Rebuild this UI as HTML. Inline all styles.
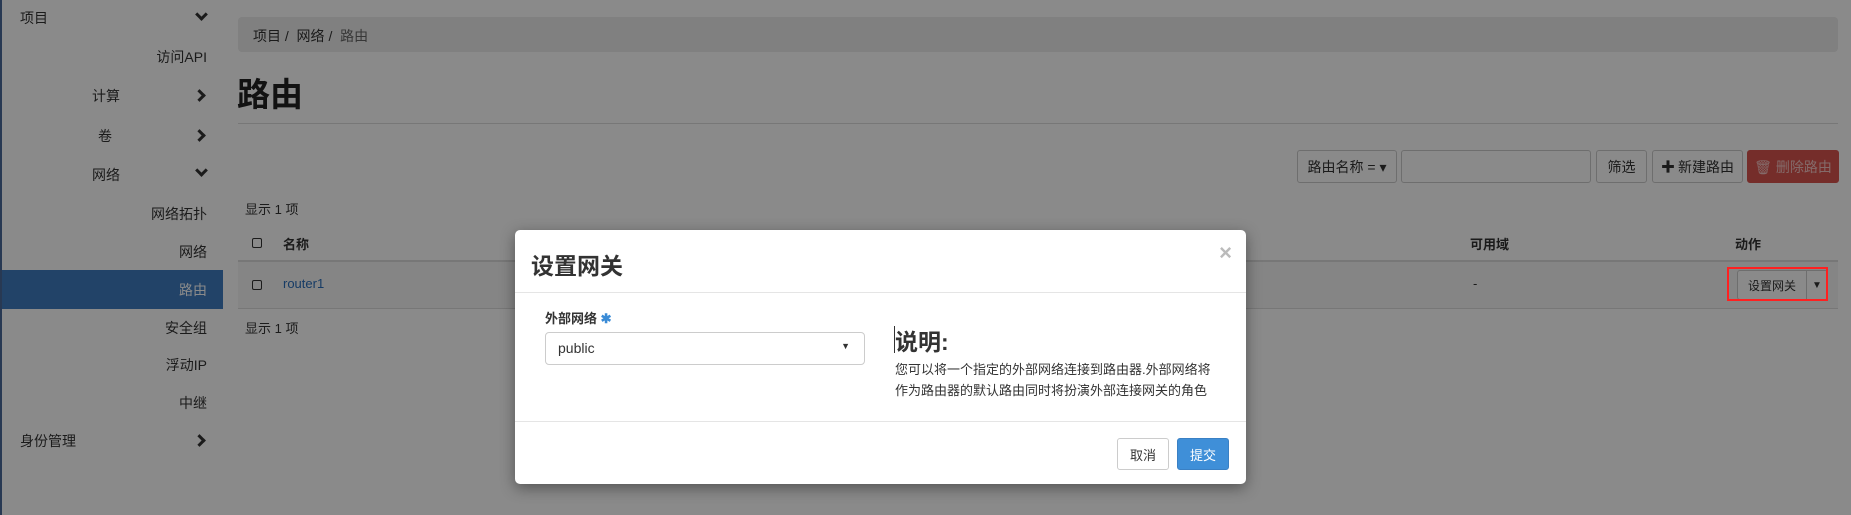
<!DOCTYPE html>
<html><head><meta charset="utf-8"><style>
*{box-sizing:border-box;margin:0;padding:0}
body{width:1851px;height:515px;overflow:hidden;background:#fff;font-family:"Liberation Sans","Noto Sans CJK SC",sans-serif;font-size:13px;color:#333;position:relative}
.abs{position:absolute}
.side{left:0;top:0;width:221px;height:515px;background:#fff;border-left:2px solid #4a6a9a}
.si{position:absolute;font-size:14px;color:#333;white-space:nowrap}
.chev{position:absolute;width:9px;height:9px;border-right:3px solid #333;border-bottom:3px solid #333}
.down{transform:rotate(45deg)}
.right{transform:rotate(-45deg)}
.btn{position:absolute;border:1px solid #ccc;border-radius:3px;background:#fff;font-size:14px;display:flex;align-items:center;justify-content:center;color:#333}
.cb{position:absolute;width:10px;height:10px;border:1.5px solid #333;border-radius:2px}
.ov{left:0;top:0;width:1851px;height:515px;background:rgba(0,0,0,0.46)}
</style></head><body>
<div class="abs side">
 <div class="si" style="left:18px;top:8px">项目</div><div class="chev down" style="left:195px;top:10px"></div>
 <div class="si" style="right:14px;top:47px">访问API</div>
 <div class="si" style="left:90px;top:86px">计算</div><div class="chev right" style="left:193px;top:91px"></div>
 <div class="si" style="left:96px;top:126px">卷</div><div class="chev right" style="left:193px;top:131px"></div>
 <div class="si" style="left:90px;top:165px">网络</div><div class="chev down" style="left:195px;top:166px"></div>
 <div class="si" style="right:14px;top:204px">网络拓扑</div>
 <div class="si" style="right:14px;top:242px">网络</div>
 <div class="abs" style="left:0;top:270px;width:221px;height:39px;background:#3f7cc0"></div>
 <div class="si" style="right:14px;top:280px;color:#fff">路由</div>
 <div class="si" style="right:14px;top:318px">安全组</div>
 <div class="si" style="right:14px;top:355px">浮动IP</div>
 <div class="si" style="right:14px;top:393px">中继</div>
 <div class="si" style="left:18px;top:431px">身份管理</div><div class="chev right" style="left:193px;top:436px"></div>
</div>
<div class="abs" style="left:238px;top:17px;width:1600px;height:35px;background:#ececec;border-radius:4px;font-size:14px;padding:9px 15px;color:#333">项目 / &nbsp;网络 / &nbsp;<span style="color:#666">路由</span></div>
<div class="abs" style="left:237px;top:68px;font-size:33px;font-weight:bold;color:#222">路由</div>
<div class="abs" style="left:238px;top:123px;width:1600px;height:1px;background:#ddd"></div>
<div class="btn" style="left:1297px;top:150px;width:100px;height:33px">路由名称 = ▾</div>
<div class="btn" style="left:1401px;top:150px;width:190px;height:33px"></div>
<div class="btn" style="left:1596px;top:150px;width:51px;height:33px">筛选</div>
<div class="btn" style="left:1652px;top:150px;width:91px;height:33px"><b style="margin-right:3px">✚</b>新建路由</div>
<div class="btn" style="left:1747px;top:150px;width:92px;height:33px;background:#d9534f;border-color:#d9534f;color:#f4c4c2">🗑 删除路由</div>
<div class="abs" style="left:245px;top:199px;font-size:13px">显示 1 项</div>
<div class="cb" style="left:252px;top:238px"></div>
<div class="abs" style="left:283px;top:234px;font-weight:bold;font-size:13px">名称</div>
<div class="abs" style="left:1470px;top:234px;font-weight:bold;font-size:13px">可用域</div>
<div class="abs" style="left:1735px;top:234px;font-weight:bold;font-size:13px">动作</div>
<div class="abs" style="left:238px;top:260px;width:1600px;height:2px;background:#ddd"></div>
<div class="abs" style="left:238px;top:262px;width:1600px;height:46px;background:#f5f5f5"></div>
<div class="cb" style="left:252px;top:280px"></div>
<div class="abs" style="left:283px;top:276px;color:#2a6ebb">router1</div>
<div class="abs" style="left:1473px;top:276px">-</div>
<div class="btn" style="left:1737px;top:270px;width:70px;height:30px;font-size:12px;border-radius:3px 0 0 3px">设置网关</div>
<div class="btn" style="left:1806px;top:270px;width:22px;height:30px;font-size:10px;border-radius:0 3px 3px 0">▼</div>
<div class="abs" style="left:238px;top:308px;width:1600px;height:1px;background:#ddd"></div>
<div class="abs" style="left:245px;top:318px">显示 1 项</div>
<div class="abs ov"></div>
<div class="abs" style="left:1727px;top:267px;width:101px;height:34px;border:2px solid #ff2020"></div>
<div class="abs" style="left:515px;top:230px;width:731px;height:254px;background:#fff;border-radius:5px;box-shadow:0 4px 15px rgba(0,0,0,.4)">
 <div class="abs" style="left:16px;top:17px;font-size:23px;font-weight:bold;color:#333">设置网关</div>
 <div class="abs" style="right:14px;top:10px;font-size:22px;font-weight:bold;color:#bbb">×</div>
 <div class="abs" style="left:0;top:62px;width:731px;height:1px;background:#e5e5e5"></div>
 <div class="abs" style="left:30px;top:78px;font-size:13px;font-weight:bold">外部网络 <span style="color:#3a8bd6">✱</span></div>
 <div class="abs" style="left:30px;top:102px;width:320px;height:33px;border:1px solid #ccc;border-radius:4px;padding:7px 12px;font-size:14px">public<span style="position:absolute;right:14px;top:8px;font-size:9px">▼</span></div>
 <div class="abs" style="left:379px;top:96px;width:1px;height:27px;background:#333"></div>
 <div class="abs" style="left:380px;top:93px;font-size:23px;font-weight:bold">说明:</div>
 <div class="abs" style="left:380px;top:129px;width:328px;font-size:13px;line-height:21px">您可以将一个指定的外部网络连接到路由器.外部网络将作为路由器的默认路由同时将扮演外部连接网关的角色</div>
 <div class="abs" style="left:0;top:191px;width:731px;height:1px;background:#e5e5e5"></div>
 <div class="btn" style="left:602px;top:208px;width:52px;height:32px;font-size:13px">取消</div>
 <div class="btn" style="left:662px;top:208px;width:52px;height:32px;font-size:13px;background:#3f8fd8;border-color:#3a80c4;color:#fff">提交</div>
</div>
</body></html>
